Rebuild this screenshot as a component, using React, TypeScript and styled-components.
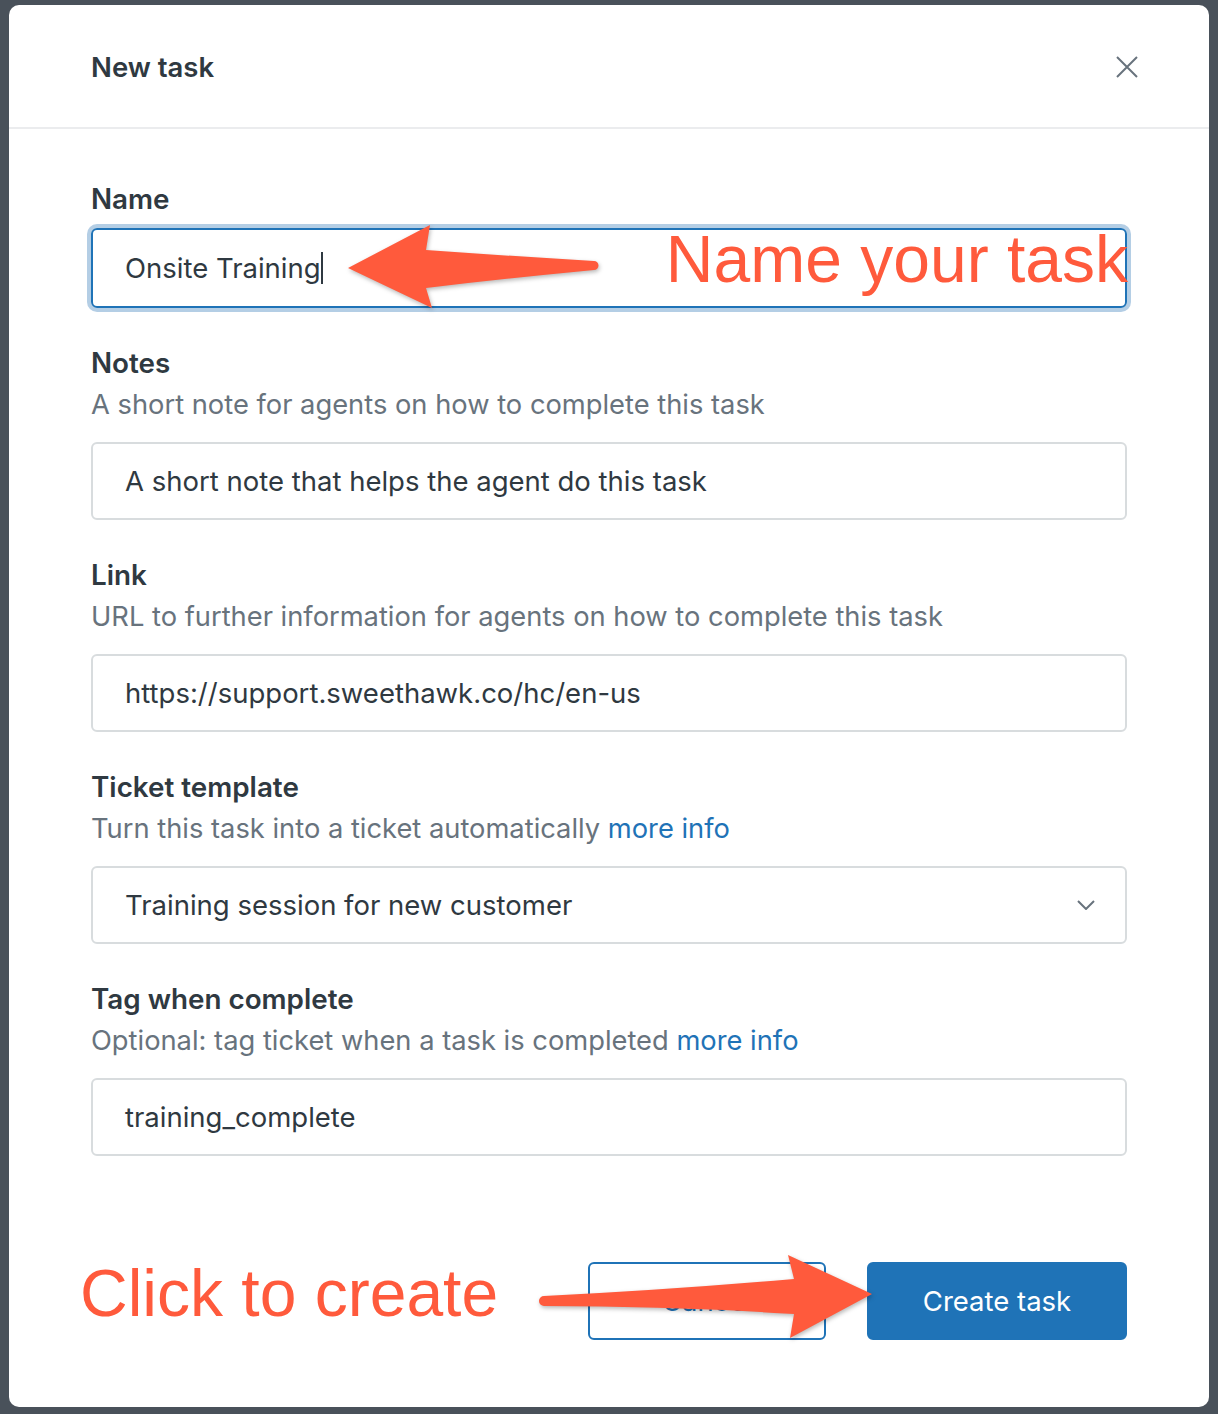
import React from "react";
import styled, { createGlobalStyle } from "styled-components";

const GlobalStyle = createGlobalStyle`
  html, body { margin: 0; padding: 0; }
  body {
    background: #49515a;
    font-family: Inter, "Noto Sans", sans-serif;
    -webkit-font-smoothing: antialiased;
  }
`;

const Backdrop = styled.div`
  box-sizing: border-box;
  height: 1414px;
  padding: 5px 9px 7px 9px;
`;

const Modal = styled.div`
  position: relative;
  height: 100%;
  background: #fff;
  border-radius: 10px;
  display: flex;
  flex-direction: column;
`;

const Header = styled.header`
  box-sizing: border-box;
  height: 124px;
  padding: 2px 71px 0 82px;
  border-bottom: 2px solid #ebecee;
  display: flex;
  align-items: center;
  justify-content: space-between;
`;

const Title = styled.h2`
  margin: 0;
  font-size: 27.5px;
  font-weight: 600;
  color: #2f3941;
`;

const CloseButton = styled.button`
  border: 0;
  padding: 0;
  background: none;
  width: 22px;
  height: 22px;
  display: flex;
  color: #68737d;
`;

const Body = styled.div`
  padding: 52px 82px 0 82px;
  display: flex;
  flex-direction: column;
  gap: 37px;
`;

const Field = styled.div`
  display: flex;
  flex-direction: column;
`;

const Label = styled.div`
  font-size: 27.8px;
  line-height: 36px;
  font-weight: 600;
  color: #2f3941;
`;

const Hint = styled.div`
  margin-top: 6px;
  font-size: 27.3px;
  line-height: 36px;
  color: #68737d;
`;

const Anchor = styled.a`
  color: #1f73b7;
  text-decoration: none;
`;

const InputBox = styled.div<{ $focused?: boolean; $gap: number }>`
  position: relative;
  box-sizing: border-box;
  margin-top: ${(p) => p.$gap}px;
  height: ${(p) => (p.$focused ? 80 : 78)}px;
  padding: 0 32px;
  border: ${(p) => (p.$focused ? "2px solid #1f73b7" : "2px solid #d8dcde")};
  border-radius: 6px;
  box-shadow: ${(p) => (p.$focused ? "0 0 0 4px #b4cee5" : "none")};
  display: flex;
  align-items: center;
  font-size: 27.5px;
  color: #2f3941;
`;

const Caret = styled.span`
  display: inline-block;
  width: 2px;
  height: 32px;
  margin-left: 0;
  background: #2f3941;
`;

const Chevron = styled.svg`
  margin-left: auto;
  margin-right: -2px;
  color: #68737d;
`;

const Callout = styled.span`
  font-family: "Liberation Sans", Arial, sans-serif;
  font-size: 66px;
  line-height: 1;
  color: #ff5a3c;
  white-space: nowrap;
`;

const InputCallout = styled(Callout)`
  position: absolute;
  right: -3px;
  top: -4px;
`;

const Footer = styled.footer`
  margin-top: auto;
  padding: 0 82px 65px 71px;
  display: flex;
  align-items: center;
  gap: 41px;
`;

const FooterCallout = styled(Callout)`
  margin-right: auto;
  margin-bottom: 16px;
`;

const Button = styled.button<{ $primary?: boolean }>`
  box-sizing: border-box;
  height: 78px;
  width: ${(p) => (p.$primary ? 260 : 238)}px;
  border-radius: 6px;
  border: 2px solid #1f73b7;
  background: ${(p) => (p.$primary ? "#1f73b7" : "#fff")};
  color: ${(p) => (p.$primary ? "#fff" : "#1f73b7")};
  font-family: inherit;
  font-size: 27.5px;
`;

const Arrows = styled.svg`
  position: absolute;
  left: -9px;
  top: -5px;
  pointer-events: none;
  filter: drop-shadow(1px 2px 2px rgba(0, 0, 0, 0.28));
`;

function App() {
  return (
    <Backdrop>
      <GlobalStyle />
      <Modal>
        <Header>
          <Title>New task</Title>
          <CloseButton aria-label="Close">
            <svg width="22" height="22" viewBox="0 0 22 22">
              <path d="M1 1L21 21M21 1L1 21" stroke="currentColor" strokeWidth="2" />
            </svg>
          </CloseButton>
        </Header>

        <Body>
          <Field>
            <Label>Name</Label>
            <InputBox $focused $gap={11}>
              Onsite Training<Caret />
              <InputCallout>Name your task</InputCallout>
            </InputBox>
          </Field>

          <Field>
            <Label>Notes</Label>
            <Hint>A short note for agents on how to complete this task</Hint>
            <InputBox $gap={19}>A short note that helps the agent do this task</InputBox>
          </Field>

          <Field>
            <Label>Link</Label>
            <Hint>URL to further information for agents on how to complete this task</Hint>
            <InputBox $gap={19}>https://support.sweethawk.co/hc/en-us</InputBox>
          </Field>

          <Field>
            <Label>Ticket template</Label>
            <Hint>
              Turn this task into a ticket automatically <Anchor href="#">more info</Anchor>
            </Hint>
            <InputBox $gap={19}>
              Training session for new customer
              <Chevron width="18" height="10" viewBox="0 0 18 10">
                <path d="M1 1L9 9L17 1" fill="none" stroke="currentColor" strokeWidth="2" />
              </Chevron>
            </InputBox>
          </Field>

          <Field>
            <Label>Tag when complete</Label>
            <Hint>
              Optional: tag ticket when a task is completed <Anchor href="#">more info</Anchor>
            </Hint>
            <InputBox $gap={19}>training_complete</InputBox>
          </Field>
        </Body>

        <Footer>
          <FooterCallout>Click to create</FooterCallout>
          <Button>Cancel</Button>
          <Button $primary>Create task</Button>
        </Footer>

        <Arrows width="1218" height="1414" viewBox="0 0 1218 1414">
          <path
            fill="#ff5a3c"
            d="M348 268 L430 225 L426 250 Q510 256 594 261 A4.5 4.5 0 0 1 594 270 Q510 278 426 288 L432 308 Z"
          />
          <path
            fill="#ff5a3c"
            d="M872 1294 L788 1255 L794 1279 Q665 1290 544 1296 A5 5 0 0 0 544 1306 Q670 1306 794 1314 L790 1338 Z"
          />
        </Arrows>
      </Modal>
    </Backdrop>
  );
}

export default App;
